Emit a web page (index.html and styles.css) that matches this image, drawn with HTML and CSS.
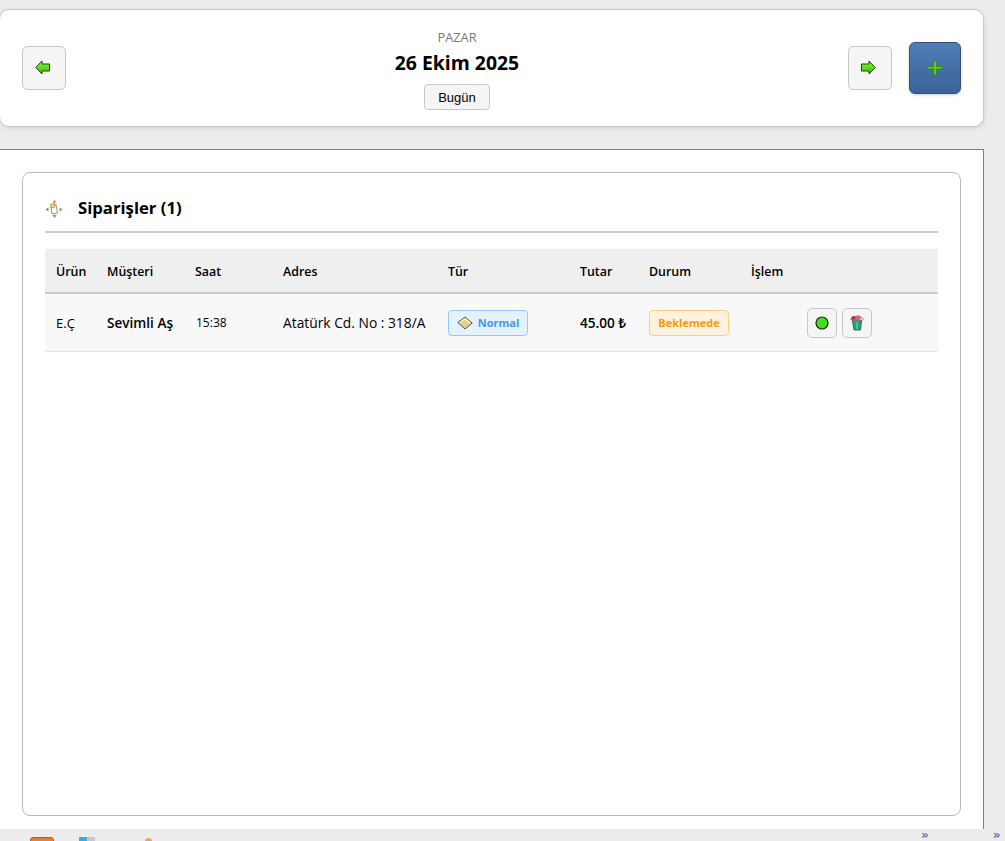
FILE: index.html
```html
<!DOCTYPE html>
<html lang="tr">
<head>
    <meta charset="UTF-8">
    <meta name="viewport" content="width=device-width, initial-scale=1.0">
    <title>Siparişler</title>
    <link rel="stylesheet" href="styles.css">
</head>
<body>

    <header class="day-bar">
        <button type="button" class="nav-btn" aria-label="Önceki gün">
            <svg class="nav-icon" width="16" height="15" viewBox="0 0 16 15">
                <defs>
                    <linearGradient id="arrowLeft" x1="0" y1="0" x2="0" y2="1">
                        <stop offset="0" stop-color="#7dff2a"/>
                        <stop offset="1" stop-color="#35c400"/>
                    </linearGradient>
                </defs>
                <path d="M0.8 7.5 L7 1 V4 H14.5 V11 H7 V14 Z" fill="url(#arrowLeft)" stroke="#26401c" stroke-width="1"/>
            </svg>
        </button>

        <div class="day-info">
            <div class="day-name">PAZAR</div>
            <div class="day-date">26 Ekim 2025</div>
            <button type="button" class="today-btn">Bugün</button>
        </div>

        <div class="day-actions">
            <button type="button" class="nav-btn" aria-label="Sonraki gün">
                <svg class="nav-icon" width="16" height="15" viewBox="0 0 16 15">
                    <defs>
                        <linearGradient id="arrowRight" x1="0" y1="0" x2="0" y2="1">
                            <stop offset="0" stop-color="#7dff2a"/>
                            <stop offset="1" stop-color="#35c400"/>
                        </linearGradient>
                    </defs>
                    <path d="M15.2 7.5 L9 1 V4 H1.5 V11 H9 V14 Z" fill="url(#arrowRight)" stroke="#26401c" stroke-width="1"/>
                </svg>
            </button>
            <button type="button" class="add-btn" aria-label="Yeni sipariş">
                <svg width="16" height="16" viewBox="0 0 16 16">
                    <path d="M6.5 1 H9.5 V6.5 H15.5 V9 H9.5 V15 H6.5 V9 H0.5 V6.5 H6.5 Z" fill="#5fca24" stroke="#2a7a1c" stroke-width="0.7"/>
                </svg>
            </button>
        </div>
    </header>

    <main class="main-panel">
        <section class="orders-card">
            <h2 class="orders-title">
                <svg class="title-icon" width="18" height="18" viewBox="0 0 18 18">
                    <path d="M6 6 L11 4.5 L12.5 13 L7 14 Z" fill="#fff" stroke="#8d8d8d" stroke-width="1"/>
                    <path d="M5.5 4.5 L9.5 3.5 L10 7 L6 8 Z" fill="#f1dc4c" stroke="#a58b2a" stroke-width="0.7"/>
                    <path d="M0.5 9.5 L3.5 7.3 V11.7 Z" fill="#a58f55"/>
                    <path d="M17.5 9.5 L14.5 7.3 V11.7 Z" fill="#a58f55"/>
                    <path d="M9.5 0 L7.3 2.6 H11.7 Z" fill="#a58f55"/>
                    <path d="M9.5 18 L7.3 15 H11.7 Z" fill="#a58f55"/>
                </svg>
                <span>Siparişler (1)</span>
            </h2>

            <table class="orders-table">
                <colgroup>
                    <col class="col-product">
                    <col class="col-customer">
                    <col class="col-time">
                    <col class="col-address">
                    <col class="col-type">
                    <col class="col-total">
                    <col class="col-status">
                    <col class="col-action">
                </colgroup>
                <thead>
                    <tr>
                        <th>Ürün</th>
                        <th>Müşteri</th>
                        <th>Saat</th>
                        <th>Adres</th>
                        <th>Tür</th>
                        <th>Tutar</th>
                        <th>Durum</th>
                        <th>İşlem</th>
                    </tr>
                </thead>
                <tbody>
                    <tr>
                        <td class="product">E.Ç</td>
                        <td class="strong">Sevimli Aş</td>
                        <td class="time">15:38</td>
                        <td>Atatürk Cd. No : 318/A</td>
                        <td>
                            <span class="badge badge-type">
                                <svg width="16" height="14" viewBox="0 0 16 14">
                                    <path d="M0.8 6.5 L8 1 L15.2 7 L8 13 Z" fill="#dcd488" stroke="#5f5a3c" stroke-width="1"/>
                                    <path d="M3 6.5 L8 2.8 L13 7" fill="none" stroke="#f8f4cc" stroke-width="1.2"/>
                                </svg>
                                Normal
                            </span>
                        </td>
                        <td class="strong">45.00 ₺</td>
                        <td><span class="badge badge-status">Beklemede</span></td>
                        <td class="actions">
                            <div class="row-actions">
                                <button type="button" class="row-btn" aria-label="Tamamla">
                                    <svg width="14" height="14" viewBox="0 0 14 14">
                                        <circle cx="7" cy="7" r="6" fill="#3fe01f" stroke="#1c2b18" stroke-width="1.2"/>
                                    </svg>
                                </button>
                                <button type="button" class="row-btn" aria-label="Sil">
                                    <svg width="16" height="17" viewBox="0 0 16 17">
                                        <path d="M3.5 7 H12.5 L11.5 16 H5 Z" fill="#1fa57e" stroke="#14584a" stroke-width="0.8"/>
                                        <path d="M8 7 V15" stroke="#7fdcbc" stroke-width="1"/>
                                        <ellipse cx="8" cy="5" rx="6.5" ry="3" fill="#7d7480"/>
                                        <circle cx="9" cy="3.8" r="2.6" fill="#dd5f78"/>
                                        <circle cx="4.4" cy="3.6" r="1.7" fill="#a8302a"/>
                                        <circle cx="12.4" cy="5" r="1.3" fill="#e6dfe0"/>
                                    </svg>
                                </button>
                            </div>
                        </td>
                    </tr>
                </tbody>
            </table>
        </section>
    </main>

    <footer class="bottom-bar">
        <span class="tray-icon tray-orange"></span>
        <span class="tray-icon tray-blue"></span>
        <span class="tray-icon tray-tan"></span>
        <span class="tray-more tray-more-first">»</span>
        <span class="tray-more tray-more-last">»</span>
    </footer>

</body>
</html>
```

FILE: styles.css
```css
html, body {
    height: 100%;
}

body {
    margin: 0;
    display: flex;
    flex-direction: column;
    height: 841px;
    overflow: hidden;
    background-color: #ececec;
    font-family: "Open Sans", "Noto Sans", sans-serif;
    color: #000;
}

button {
    cursor: pointer;
}

.day-bar {
    width: 985px;
    height: 118px;
    box-sizing: border-box;
    margin-top: 9px;
    margin-left: -1px;
    padding: 0 22px;
    display: flex;
    align-items: center;
    justify-content: space-between;
    background-color: #fff;
    border: 1px solid #c8c8c8;
    border-radius: 10px;
    box-shadow: 0 1px 4px rgba(0, 0, 0, 0.12);
}

.nav-btn {
    width: 44px;
    height: 44px;
    padding: 0;
    display: flex;
    align-items: center;
    justify-content: center;
    background-color: #f5f5f5;
    border: 1px solid #c8c8c8;
    border-radius: 5px;
}

.nav-icon {
    margin: 0 3px 2px 0;
}

.day-info {
    margin-top: 3px;
    display: flex;
    flex-direction: column;
    align-items: center;
}

.day-name {
    font-size: 12.8px;
    line-height: 16px;
    color: #777;
}

.day-date {
    margin-top: 5px;
    font-size: 19.4px;
    line-height: 26px;
    font-weight: 700;
}

.today-btn {
    width: 66px;
    height: 26px;
    margin-top: 8px;
    padding: 0;
    font-family: "Liberation Sans", Arial, sans-serif;
    font-size: 13px;
    color: #000;
    background-color: #f5f5f5;
    border: 1px solid #c8c8c8;
    border-radius: 4px;
}

.day-actions {
    display: flex;
    align-items: center;
    gap: 17px;
}

.add-btn {
    width: 52px;
    height: 52px;
    padding: 0;
    display: flex;
    align-items: center;
    justify-content: center;
    background: linear-gradient(#4f7fb6, #3a6298);
    border: 1px solid #2f5078;
    border-radius: 6px;
    box-shadow: 0 1px 3px rgba(0, 0, 0, 0.2);
}

.main-panel {
    flex: 1;
    width: 984px;
    box-sizing: border-box;
    margin-top: 22px;
    padding: 22px;
    padding-bottom: 13px;
    display: flex;
    background-color: #fff;
    border-top: 1px solid #808080;
    border-right: 1px solid #808080;
}

.orders-card {
    flex: 1;
    padding: 22px;
    background-color: #fff;
    border: 1px solid #bbb;
    border-radius: 8px;
}

.orders-title {
    box-sizing: border-box;
    margin: 0 0 16px;
    height: 38px;
    padding-bottom: 12px;
    display: flex;
    align-items: center;
    gap: 15px;
    font-size: 16.7px;
    font-weight: 700;
    border-bottom: 2px solid #ccc;
}

.title-icon {
    margin-top: 4px;
}

.orders-table {
    width: 100%;
    table-layout: fixed;
    border-collapse: collapse;
    font-size: 13.8px;
}

.col-product { width: 51px; }
.col-customer { width: 88px; }
.col-time { width: 88px; }
.col-address { width: 165px; }
.col-type { width: 132px; }
.col-total { width: 69px; }
.col-status { width: 102px; }
.col-action { width: 198px; }

.orders-table th {
    height: 42px;
    padding: 1px 11px 0;
    text-align: left;
    font-size: 12.4px;
    font-weight: 600;
    background-color: #efefef;
    border-bottom: 2px solid #ccc;
}

.orders-table td {
    height: 57px;
    padding: 0 11px;
    white-space: nowrap;
    background-color: #f8f8f8;
    border-bottom: 1px solid #e5e5e5;
}

.orders-table .product {
    font-size: 13px;
}

.orders-table .strong {
    font-size: 13.6px;
    font-weight: 600;
}

.orders-table .time {
    font-size: 12px;
    padding-left: 12px;
}

.badge {
    box-sizing: border-box;
    width: 80px;
    height: 26px;
    display: inline-flex;
    align-items: center;
    justify-content: center;
    gap: 5px;
    font-size: 11px;
    font-weight: 700;
    border-radius: 4px;
    vertical-align: middle;
}

.badge-type {
    color: #4496f0;
    background-color: #e3f2fd;
    border: 1px solid #90caf9;
}

.badge-status {
    color: #ff9800;
    background-color: #fff3e0;
    border: 1px solid #ffcc80;
}

.row-actions {
    display: flex;
    justify-content: center;
    gap: 5px;
    padding-left: 1px;
}

.row-btn {
    width: 30px;
    height: 30px;
    padding: 0;
    display: flex;
    align-items: center;
    justify-content: center;
    background-color: #f5f5f5;
    border: 1px solid #c8c8c8;
    border-radius: 5px;
}

.bottom-bar {
    height: 12px;
    display: flex;
    align-items: flex-start;
    overflow: hidden;
}

.tray-icon {
    display: block;
    height: 12px;
    margin-top: 8px;
}

.tray-orange {
    width: 24px;
    margin-left: 30px;
    background: linear-gradient(#e8762a, #f59a4e);
    border: 1px solid #c05a14;
    box-sizing: border-box;
    border-radius: 3px 3px 0 0;
}

.tray-blue {
    width: 16px;
    margin-left: 25px;
    background: linear-gradient(90deg, #38aee0 50%, #c8c8c8 50%);
}

.tray-tan {
    width: 7px;
    margin-left: 50px;
    margin-top: 9px;
    background-color: #e0a868;
    border-radius: 4px 4px 0 0;
}

.tray-more {
    font-family: "DejaVu Sans", sans-serif;
    font-weight: 700;
    font-size: 12px;
    line-height: 12px;
    color: #7070b0;
}

.tray-more-first {
    margin-left: 769px;
}

.tray-more-last {
    margin-left: 64px;
}
```
